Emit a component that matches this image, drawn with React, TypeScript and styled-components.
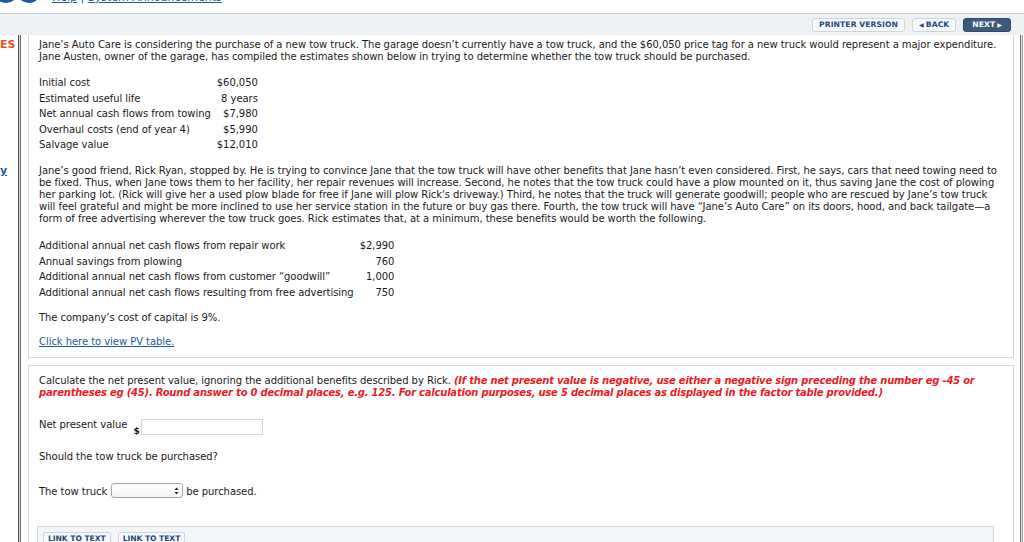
import React from "react";
import styled, { createGlobalStyle } from "styled-components";

const Global = createGlobalStyle`
  html, body { margin: 0; padding: 0; background: #ffffff; }
  body { font-family: "DejaVu Sans", Verdana, sans-serif; font-size: 10px; color: #1a1a1a; }
`;

const Page = styled.div`
  width: 1024px;
  height: 542px;
  overflow: hidden;
  display: flex;
  flex-direction: column;
`;

const TopStrip = styled.div`
  height: 13px;
  flex: none;
  overflow: hidden;
  display: flex;
  align-items: flex-start;
  gap: 16px;
`;

const Logo = styled.svg`
  margin-top: -22px;
  flex: none;
`;

const TopLinks = styled.div`
  margin-top: -9px;
  font-size: 11px;
  color: #1d5a9e;
  a { color: #1d5a9e; text-decoration: underline; }
`;

const Toolbar = styled.div`
  height: 21px;
  flex: none;
  background: #eef1f4;
  border-top: 1px solid #c7cfd8;
  display: flex;
  align-items: center;
  justify-content: flex-end;
  padding-right: 13px;
  gap: 7px;
`;

const ToolButton = styled.div<{ $dark?: boolean }>`
  height: 14px;
  box-sizing: border-box;
  padding: 0 ${(p) => (p.$dark ? "8px" : "6px")};
  display: flex;
  align-items: center;
  gap: 2px;
  border-radius: 3px;
  border: 1px solid ${(p) => (p.$dark ? "#2f4b68" : "#cdd6df")};
  background: ${(p) => (p.$dark ? "#3c5a79" : "#f7f9fb")};
  color: ${(p) => (p.$dark ? "#ffffff" : "#23497a")};
  font-size: 7.6px;
  font-weight: bold;
  letter-spacing: 0.1px;
`;

const Caret = styled.span`
  font-size: 6px;
`;

const Body = styled.div`
  flex: 1;
  display: flex;
  min-height: 0;
`;

const Sidebar = styled.div`
  width: 18px;
  flex: none;
  overflow: hidden;
  display: flex;
  flex-direction: column;
  font-weight: bold;
  font-size: 11px;
`;

const SideItem = styled.div<{ $top: number; $color: string; $link?: boolean }>`
  margin-top: ${(p) => p.$top}px;
  height: 12px;
  line-height: 12px;
  color: ${(p) => p.$color};
  text-decoration: ${(p) => (p.$link ? "underline" : "none")};
  white-space: nowrap;
`;

const FrameRule = styled.div`
  width: 1px;
  flex: none;
  border-left: 1px solid #4a4a4a;
  border-right: 1px solid #6a6a6a;
  background: #dcdcdc;
`;

const Main = styled.div`
  flex: 1;
  min-width: 0;
  padding: 0 6px 0 7px;
  display: flex;
  flex-direction: column;
  gap: 7px;
`;

const Panel = styled.div<{ $top?: boolean }>`
  border: 1px solid #cfd8e1;
  border-top: ${(p) => (p.$top ? "1px solid #cfd8e1" : "none")};
  background: #ffffff;
  padding: ${(p) => (p.$top ? "9px" : "4px")} 10px 9px 10px;
  display: flex;
  flex-direction: column;
  align-items: flex-start;
  line-height: 12px;
  font-size: 10px;
  letter-spacing: -0.05px;
`;

const Para = styled.p<{ $mt?: number }>`
  margin: ${(p) => p.$mt ?? 0}px 0 0 0;
  white-space: nowrap;
`;

const Red = styled.span`
  color: #ec1c24;
  font-weight: bold;
  font-style: italic;
  letter-spacing: -0.22px;
`;

const DataTable = styled.table<{ $mt: number }>`
  border-collapse: collapse;
  margin-top: ${(p) => p.$mt}px;
  td { padding: 0; height: 15.6px; line-height: 15.6px; white-space: nowrap; }
  td + td { text-align: right; padding-left: 6px; }
`;

const Link = styled.a`
  color: #1d5a9e;
  text-decoration: underline;
  margin-top: 12px;
  display: inline-block;
`;

const Row = styled.div<{ $mt: number }>`
  margin-top: ${(p) => p.$mt}px;
  display: flex;
  align-items: flex-start;
`;

const Dollar = styled.span`
  font-size: 9px;
  font-weight: bold;
  margin: 6px 1px 0 6px;
`;

const TextInput = styled.div`
  width: 122px;
  height: 16px;
  box-sizing: border-box;
  border: 1px solid #d4d8dc;
  background: #fff;
`;

const Select = styled.div`
  width: 72px;
  height: 15px;
  box-sizing: border-box;
  border: 1px solid #a9a9a9;
  border-radius: 3px;
  background: linear-gradient(#ffffff, #f3f3f3);
  margin: 0 3px 0 4px;
  display: flex;
  justify-content: flex-end;
  align-items: center;
  padding-right: 3px;
`;

const InlineText = styled.span<{ $mt?: number }>`
  margin-top: ${(p) => p.$mt ?? 0}px;
  line-height: 12px;
`;

const LinkBar = styled.div`
  margin: 28px 9px 0 -2px;
  align-self: stretch;
  border: 1px solid #cfd8e1;
  border-bottom: none;
  background: #f3f6f9;
  padding: 5px 5px 0 5px;
  display: flex;
  gap: 7px;
  height: 30px;
`;

const LinkButton = styled.div`
  height: 14px;
  box-sizing: border-box;
  border: 1px solid #cdd6df;
  border-radius: 2px;
  background: #f9fafc;
  color: #23497a;
  font-size: 7.6px;
  font-weight: bold;
  padding: 0 4px;
  display: flex;
  align-items: center;
`;

const RightRule = styled.div`
  width: 1px;
  flex: none;
  margin-right: 1px;
  border-left: 1px solid #6a6a6a;
  border-right: 1px solid #9a9a9a;
  background: #e4e4e4;
`;

const SelectArrows = () => (
  <svg width="5" height="8" viewBox="0 0 5 8">
    <path d="M0.5 3 L2.5 0.5 L4.5 3 Z" fill="#222" />
    <path d="M0.5 5 L2.5 7.5 L4.5 5 Z" fill="#222" />
  </svg>
);

const table1 = [
  ["Initial cost", "$60,050"],
  ["Estimated useful life", "8 years"],
  ["Net annual cash flows from towing", "$7,980"],
  ["Overhaul costs (end of year 4)", "$5,990"],
  ["Salvage value", "$12,010"],
];

const table2 = [
  ["Additional annual net cash flows from repair work", "$2,990"],
  ["Annual savings from plowing", "760"],
  ["Additional annual net cash flows from customer \u201cgoodwill\u201d", "1,000"],
  ["Additional annual net cash flows resulting from free advertising", "750"],
];

export default function App() {
  return (
    <Page>
      <Global />
      <TopStrip>
        <Logo width="36" height="30" viewBox="0 0 36 30">
          <circle cx="6" cy="12" r="13" fill="#1e5aa0" />
          <circle cx="29" cy="12" r="13" fill="#1e5aa0" />
        </Logo>
        <TopLinks>
          <a>Help</a> | <a>System Announcements</a>
        </TopLinks>
      </TopStrip>
      <Toolbar>
        <ToolButton>PRINTER VERSION</ToolButton>
        <ToolButton>
          <Caret>◀</Caret>BACK
        </ToolButton>
        <ToolButton $dark>
          NEXT<Caret>▶</Caret>
        </ToolButton>
      </Toolbar>
      <Body>
        <Sidebar>
          <SideItem $top={4} $color="#e0561c">ES</SideItem>
          <SideItem $top={114} $color="#1d5a9e" $link>
            y
          </SideItem>
        </Sidebar>
        <FrameRule />
        <Main>
          <Panel>
            <Para>
              Jane’s Auto Care is considering the purchase of a new tow truck. The garage doesn’t currently have a tow truck, and the $60,050 price tag for a new truck would represent a major expenditure.
              <br />
              Jane Austen, owner of the garage, has compiled the estimates shown below in trying to determine whether the tow truck should be purchased.
            </Para>
            <DataTable $mt={12}>
              <tbody>
                {table1.map(([a, b]) => (
                  <tr key={a}>
                    <td>{a}</td>
                    <td>{b}</td>
                  </tr>
                ))}
              </tbody>
            </DataTable>
            <Para $mt={12}>
              Jane’s good friend, Rick Ryan, stopped by. He is trying to convince Jane that the tow truck will have other benefits that Jane hasn’t even considered. First, he says, cars that need towing need to
              <br />
              be fixed. Thus, when Jane tows them to her facility, her repair revenues will increase. Second, he notes that the tow truck could have a plow mounted on it, thus saving Jane the cost of plowing
              <br />
              her parking lot. (Rick will give her a used plow blade for free if Jane will plow Rick's driveway.) Third, he notes that the truck will generate goodwill; people who are rescued by Jane’s tow truck
              <br />
              will feel grateful and might be more inclined to use her service station in the future or buy gas there. Fourth, the tow truck will have “Jane’s Auto Care” on its doors, hood, and back tailgate—a
              <br />
              form of free advertising wherever the tow truck goes. Rick estimates that, at a minimum, these benefits would be worth the following.
            </Para>
            <DataTable $mt={13}>
              <tbody>
                {table2.map(([a, b]) => (
                  <tr key={a}>
                    <td>{a}</td>
                    <td>{b}</td>
                  </tr>
                ))}
              </tbody>
            </DataTable>
            <Para $mt={12}>The company’s cost of capital is 9%.</Para>
            <Link>Click here to view PV table.</Link>
          </Panel>
          <Panel $top>
            <Para>
              Calculate the net present value, ignoring the additional benefits described by Rick.{" "}
              <Red>(If the net present value is negative, use either a negative sign preceding the number eg -45 or</Red>
              <br />
              <Red>parentheses eg (45). Round answer to 0 decimal places, e.g. 125. For calculation purposes, use 5 decimal places as displayed in the factor table provided.)</Red>
            </Para>
            <Row $mt={20}>
              <InlineText $mt={0}>Net present value</InlineText>
              <Dollar>$</Dollar>
              <TextInput />
            </Row>
            <Para $mt={14}>Should the tow truck be purchased?</Para>
            <Row $mt={20}>
              <InlineText $mt={3}>The tow truck</InlineText>
              <Select>
                <SelectArrows />
              </Select>
              <InlineText $mt={3}>be purchased.</InlineText>
            </Row>
            <LinkBar>
              <LinkButton>LINK TO TEXT</LinkButton>
              <LinkButton>LINK TO TEXT</LinkButton>
            </LinkBar>
          </Panel>
        </Main>
        <RightRule />
      </Body>
    </Page>
  );
}
